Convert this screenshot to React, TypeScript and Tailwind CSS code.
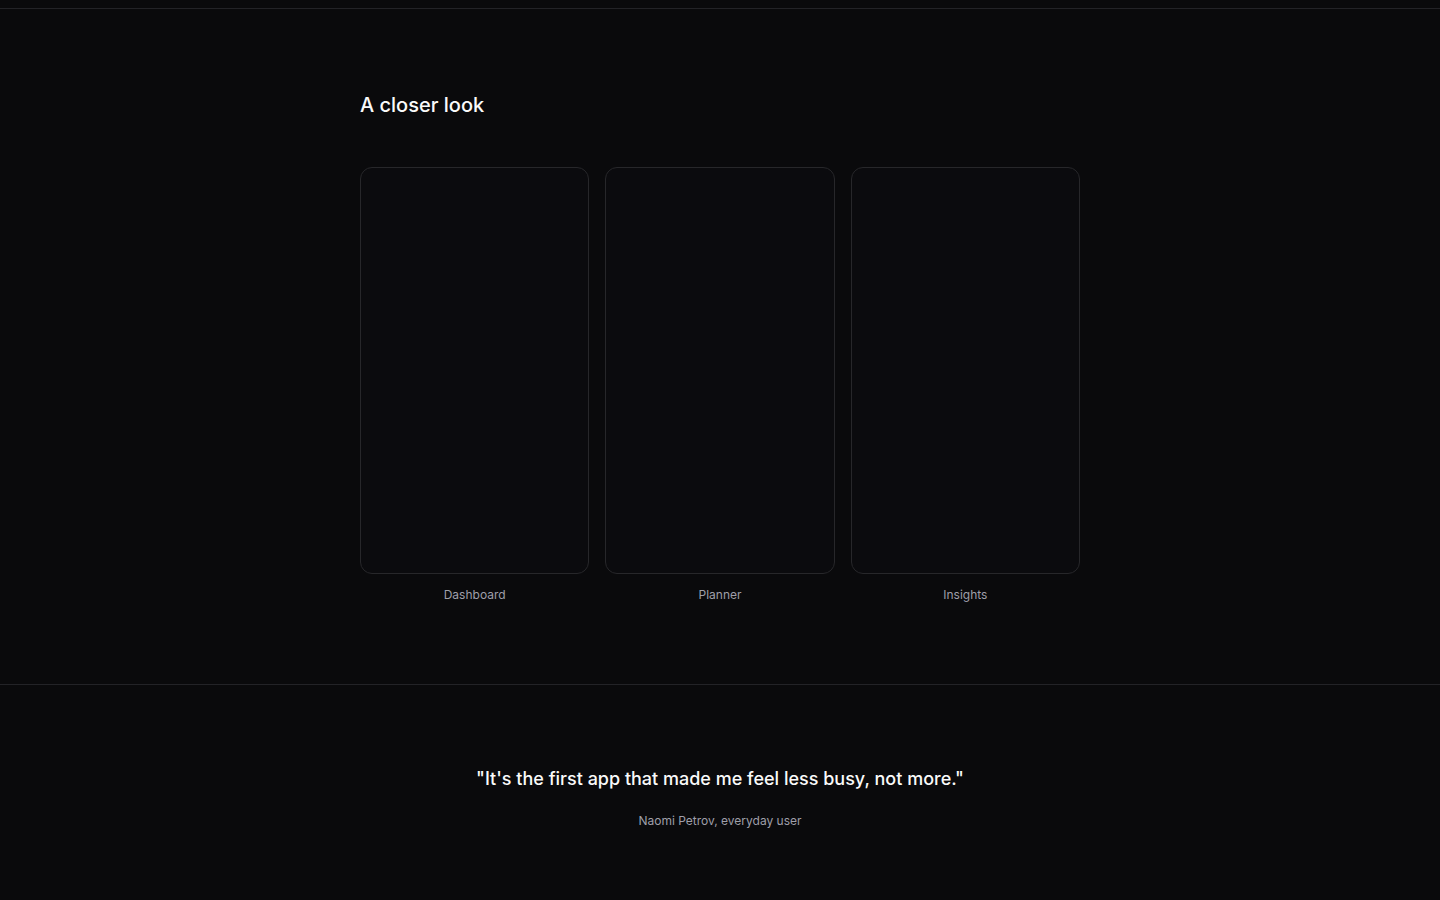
export default function App() {
  const shots = ["Dashboard", "Planner", "Insights"];

  return (
    <div
      className="min-h-screen bg-[#0a0a0c] text-zinc-100"
      style={{ fontFamily: "Inter, 'Noto Sans', sans-serif" }}
    >
      <div className="h-[9px] border-b border-[#232327]" />

      {/* Screenshots */}
      <section className="border-b border-[#232327] pt-[82px] pb-[81px]">
        <div className="mx-auto w-[720px]">
          <h2 className="text-xl font-medium leading-7 text-zinc-50">A closer look</h2>
          <div className="mt-12 grid grid-cols-3 gap-4">
            {shots.map((label) => (
              <figure key={label}>
                <div className="h-[407px] rounded-xl border border-[#27272a] bg-[#0b0b0e]" />
                <figcaption className="mt-[13px] text-center text-xs leading-4 text-zinc-400">
                  {label}
                </figcaption>
              </figure>
            ))}
          </div>
        </div>
      </section>

      {/* Testimonial */}
      <section className="pt-20 pb-20 text-center">
        <blockquote className="text-lg font-medium leading-7 text-zinc-50">
          "It's the first app that made me feel less busy, not more."
        </blockquote>
        <p className="mt-5 text-xs leading-4 text-zinc-400">Naomi Petrov, everyday user</p>
      </section>
    </div>
  );
}
